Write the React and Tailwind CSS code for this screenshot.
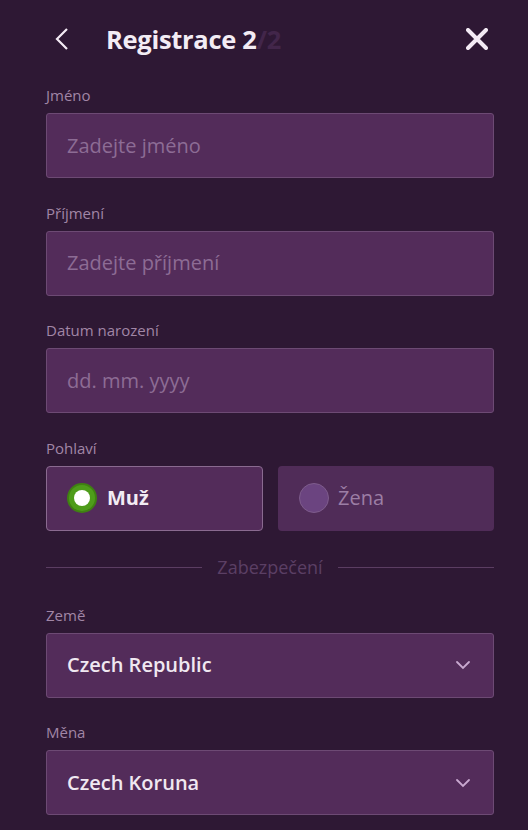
import React from "react";

function Label({ children }) {
  return (
    <div className="pt-[4px] text-[15px] leading-[20px] text-[#a186a6] mb-[8px]">
      {children}
    </div>
  );
}

function TextField({ label, placeholder }) {
  return (
    <div className="mb-[20.5px]">
      <Label>{label}</Label>
      <div className="h-[65px] rounded-[3px] border border-[#6d4a74] bg-[#532c5a] flex items-center pl-[20px] text-[20px] text-[#8d6c95]">
        {placeholder}
      </div>
    </div>
  );
}

function SelectField({ label, value }) {
  return (
    <div className="mb-[20.5px]">
      <Label>{label}</Label>
      <div className="h-[65px] rounded-[3px] border border-[#6d4a74] bg-[#532c5a] flex items-center justify-between pl-[20px] pr-[22px]">
        <span className="text-[20px] font-semibold text-[#f0e8f1]">{value}</span>
        <svg width="16" height="10" viewBox="0 0 16 10" fill="none">
          <path d="M2 2l6 6 6-6" stroke="#c9a9d0" strokeWidth="1.8" strokeLinecap="round" />
        </svg>
      </div>
    </div>
  );
}

export default function App() {
  return (
    <div
      className="min-h-[830px] w-[528px] bg-[#2e1834] pl-[46px] pr-[34px]"
      style={{ fontFamily: '"Open Sans", "Noto Sans", sans-serif' }}
    >
      <div className="h-[81px] flex items-start pt-[24px]">
        <div className="flex items-center h-[30px] w-full">
          <svg width="14" height="22" viewBox="0 0 14 22" fill="none" className="ml-[9px]">
            <path d="M12 1L2 11l10 10" stroke="#f3eaf4" strokeWidth="2.2" />
          </svg>
          <div className="ml-[37px] text-[25.5px] font-bold tracking-[-0.3px] text-[#f3ecf4]">
            Registrace 2<span className="text-[#42264a]">/2</span>
          </div>
          <svg width="22" height="22" viewBox="0 0 22 22" fill="none" className="ml-auto mr-[6px]">
            <path d="M2 2l18 18M20 2L2 20" stroke="#f3eaf4" strokeWidth="4" strokeLinecap="round" />
          </svg>
        </div>
      </div>

      <TextField label="Jméno" placeholder="Zadejte jméno" />
      <TextField label="Příjmení" placeholder="Zadejte příjmení" />
      <TextField label="Datum narození" placeholder="dd. mm. yyyy" />

      <div>
        <Label>Pohlaví</Label>
        <div className="flex gap-[15px]">
          <div className="flex-1 h-[65px] rounded-[4px] border border-[#8a6a90] bg-[#532c5a] flex items-center pl-[20px]">
            <span className="w-[30px] h-[30px] rounded-full bg-[#4e9c1a] border-[2px] border-[#3f8012] flex items-center justify-center">
              <span className="w-[16px] h-[16px] rounded-full bg-white" />
            </span>
            <span className="ml-[10px] text-[20px] font-bold text-[#f3ecf4]">Muž</span>
          </div>
          <div className="flex-1 h-[65px] rounded-[4px] bg-[#502c58] flex items-center pl-[21px]">
            <span className="w-[30px] h-[30px] rounded-full bg-[#6b4480] border border-[#7e5c8c]" />
            <span className="ml-[9px] text-[20px] text-[#9c7ea5]">Žena</span>
          </div>
        </div>
      </div>

      <div className="flex items-center gap-[15px] mt-[27px] mb-[23px] h-[20px]">
        <div className="flex-1 h-px bg-[#5b3d62]" />
        <span className="text-[18px] text-[#5b3f64]">Zabezpečení</span>
        <div className="flex-1 h-px bg-[#5b3d62]" />
      </div>

      <SelectField label="Země" value="Czech Republic" />
      <SelectField label="Měna" value="Czech Koruna" />
    </div>
  );
}
